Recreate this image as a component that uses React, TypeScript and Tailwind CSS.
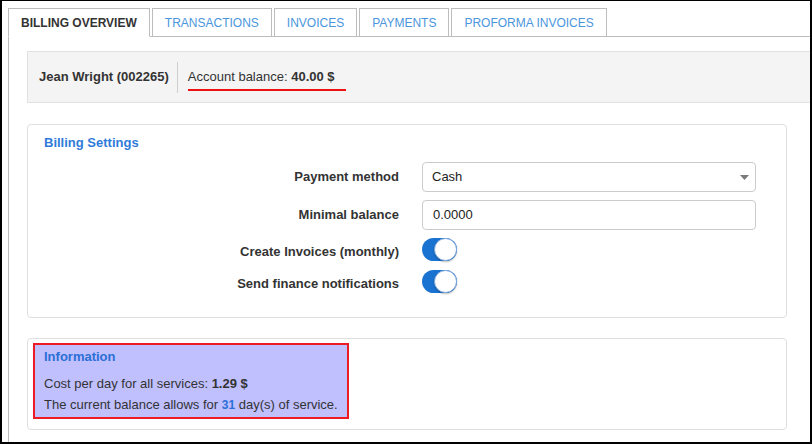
import React from "react"

const tabs = ["Billing overview", "Transactions", "Invoices", "Payments", "Proforma invoices"]

// pill switch, always on in the picture
const Toggle: React.FC = () => (
    <div className="relative w-[35px] h-[23px] rounded-full bg-[#1a73d1]">
        <div className="absolute right-0 top-0 w-[23px] h-[23px] rounded-full bg-white border border-[#7aa8e2] shadow-[0_1px_2px_rgba(0,0,0,0.25)]" />
    </div>
)

interface RowProps {
    label: string
    children: React.ReactNode
    className?: string
}

const Row: React.FC<RowProps> = ({ label, children, className }) => (
    <div className={"flex " + (className ?? "items-center")}>
        <div className="w-[355px] text-right font-bold text-[13px] text-[#333]">{label}</div>
        <div className="ml-[23px] w-[334px]">{children}</div>
    </div>
)

export default function App() {
    return (
        <div className="w-[812px] h-[444px] overflow-hidden bg-white border-black border-t border-x-2 border-b-2 font-['Liberation_Sans',Arial,sans-serif] text-[13px] text-[#333]">
            <div className="pl-[6px] pt-[7px]">
                {/* tabs */}
                <div className="flex gap-[2px] border-b border-[#bdbdbd]">
                    {tabs.map((tab, index) => (
                        <div key={tab}
                            className={
                                index === 0
                                    ? "-mb-px h-[29px] px-3 flex items-center border border-[#bdbdbd] border-b-white bg-white uppercase text-[12px] font-bold text-[#333]"
                                    : "-mb-px h-[29px] px-3 flex items-center border border-[#bdbdbd] bg-white uppercase text-[12px] text-[#4a96dc]"
                            }>
                            {tab}
                        </div>
                    ))}
                </div>

                {/* tab content */}
                <div className="border-l border-[#bdbdbd] pl-[18px] pt-[14px] h-[420px]">
                    <div className="w-[800px] h-[52px] flex items-center px-[11px] bg-[#f4f4f4] border border-[#e1e1e1]">
                        <span className="font-bold">Jean Wright (002265)</span>
                        <div className="w-px h-[31px] bg-[#cfcfcf] ml-[8px] mr-[10px]" />
                        <span className="relative">
                            Account balance: <span className="font-bold">40.00 $</span>
                            <span className="absolute left-0 -right-[11px] top-[calc(100%+2px)] h-[2px] bg-[#ee1111]" />
                        </span>
                    </div>

                    <div className="mt-[21px] w-[760px] rounded-[4px] border border-[#dfdfdf] bg-white px-4 pt-[10px] pb-[19px]">
                        <div className="font-bold leading-[15px] text-[#2f7bd9]">Billing Settings</div>
                        <Row label="Payment method" className="items-center mt-[12px]">
                            <div className="h-[30px] rounded-[4px] border border-[#cccccc] flex items-center justify-between pl-[9px] pr-[6px] text-[#222]">
                                <span>Cash</span>
                                <svg width="9" height="5" viewBox="0 0 9 5">
                                    <polygon points="0,0 9,0 4.5,5" fill="#7a7a7a" />
                                </svg>
                            </div>
                        </Row>
                        <Row label="Minimal balance" className="items-center mt-[8px]">
                            <div className="h-[30px] rounded-[4px] border border-[#cccccc] flex items-center pl-[10px] text-[#222]">
                                0.0000
                            </div>
                        </Row>
                        <Row label="Create Invoices (monthly)" className="items-center h-[28px] mt-[8px]">
                            <div className="h-[28px]">
                                <Toggle />
                            </div>
                        </Row>
                        <Row label="Send finance notifications" className="items-center h-[28px] mt-[4px]">
                            <div className="h-[28px]">
                                <Toggle />
                            </div>
                        </Row>
                    </div>

                    <div className="mt-[20px] w-[760px] h-[92px] rounded-[4px] border border-[#dfdfdf] bg-white pl-[5px] pt-[4px]">
                        <div className="w-[316px] h-[76px] border-2 border-[#ec1c24] bg-[#c0c0ff] px-[9px] pt-[3px]">
                            <div className="font-bold leading-[18px] text-[#2c6fd6]">Information</div>
                            <div className="mt-[7px] leading-[21px]">
                                Cost per day for all services: <span className="font-bold">1.29 $</span>
                            </div>
                            <div className="leading-[21px]">
                                The current balance allows for <span className="font-bold leading-none text-[12px] text-[#2c6fd6]">31</span> day(s) of service.
                            </div>
                        </div>
                    </div>
                </div>
            </div>
        </div>
    )
}
